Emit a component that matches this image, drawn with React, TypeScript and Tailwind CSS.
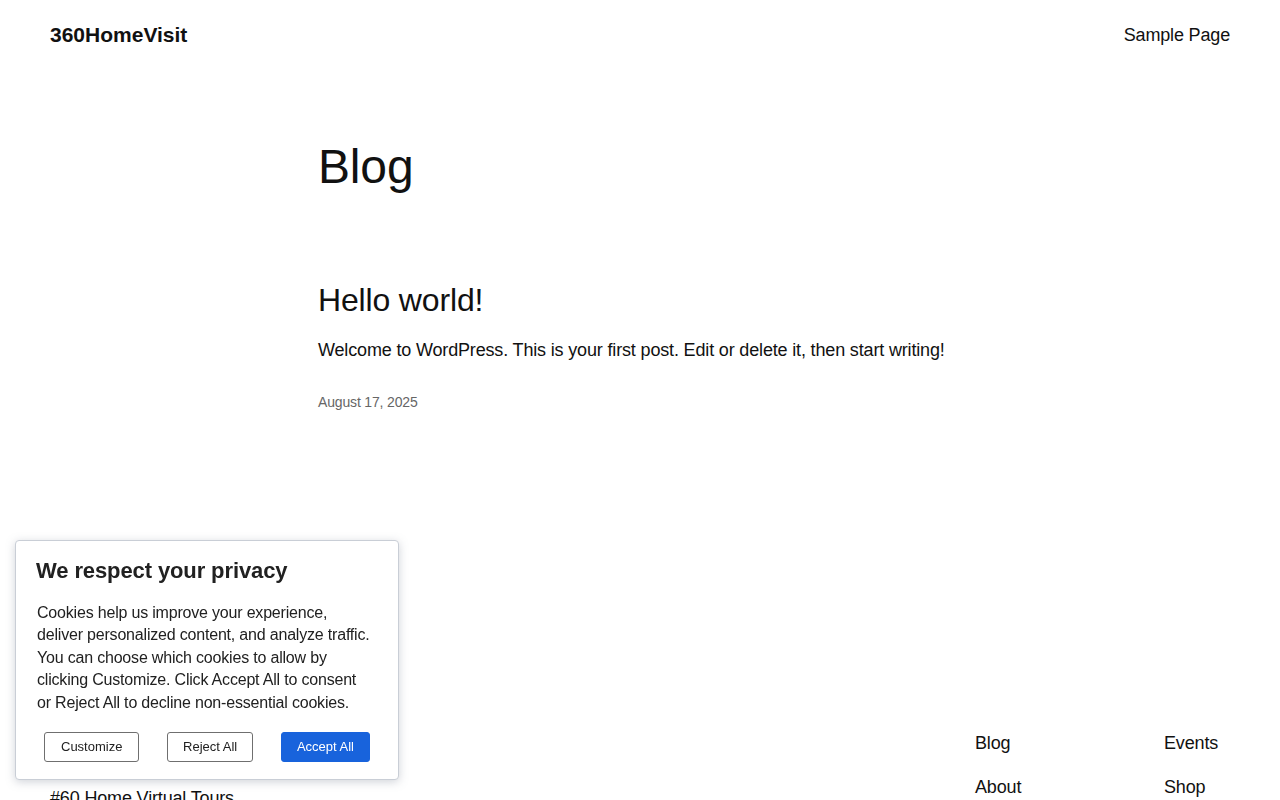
import React from 'react';

const footerCols = [
  ['Blog', 'About', 'FAQs', 'Authors'],
  ['Events', 'Shop', 'Patterns', 'Themes'],
];

const bannerLines = [
  'Cookies help us improve your experience,',
  'deliver personalized content, and analyze traffic.',
  'You can choose which cookies to allow by',
  'clicking Customize. Click Accept All to consent',
  'or Reject All to decline non-essential cookies.',
];

function CookieBanner() {
  return (
    <div className="fixed left-[15px] bottom-[20px] w-[384px] bg-white border border-[#c9ced6] rounded-[4px] shadow-[0_2px_10px_rgba(120,130,145,0.35)] px-[20px] pt-[17px] pb-[17px] text-[#212121]">
      <h2 className="text-[22px] leading-[1.2] font-bold tracking-[-0.005em]">We respect your privacy</h2>
      <p className="mt-[17px] -mr-[6px] text-[16px] leading-[22.5px] pl-[1px] tracking-[-0.012em]">
        {bannerLines.map((line) => (
          <span key={line} className="block whitespace-nowrap">{line}</span>
        ))}
      </p>
      <div className="mt-[18px] mx-[8px] flex justify-between tracking-normal">
        <button className="px-[16px] py-[6px] text-[13px] leading-[16px] border border-[#6f6f6f] rounded-[3px] bg-white text-[#212121]">
          Customize
        </button>
        <button className="px-[15px] py-[6px] text-[13px] leading-[16px] border border-[#6f6f6f] rounded-[3px] bg-white text-[#212121]">
          Reject All
        </button>
        <button className="px-[15px] py-[6px] text-[13px] leading-[16px] border border-[#1863dc] rounded-[3px] bg-[#1863dc] text-white">
          Accept All
        </button>
      </div>
    </div>
  );
}

export default function App() {
  return (
    <div className="min-h-screen bg-white text-[#111111] tracking-[-0.01em] font-['Liberation_Sans',Arial,sans-serif]">
      {/* Site header */}
      <header className="h-[70px] px-[50px] flex items-center justify-between">
        <a href="#" className="text-[21px] leading-[1.2] font-bold tracking-normal">360HomeVisit</a>
        <nav>
          <a href="#" className="text-[18px] leading-[1.2] relative top-[1px]">Sample Page</a>
        </nav>
      </header>

      {/* Posts */}
      <main className="w-[644px] mx-auto pt-[68px] pb-[287px]">
        <h1 className="text-[48px] leading-[1.2]">Blog</h1>
        <article className="mt-[85px]">
          <h2 className="text-[32px] leading-[1.2]">
            <a href="#">Hello world!</a>
          </h2>
          <p className="mt-[17px] text-[18px] leading-[1.6]">
            Welcome to WordPress. This is your first post. Edit or delete it, then start writing!
          </p>
          <p className="mt-[28px] text-[14px] leading-[1.4] text-[#666666]">August 17, 2025</p>
        </article>
      </main>

      {/* Site footer */}
      <footer className="px-[50px] pt-[34px] pb-[60px] flex justify-between">
        <div className="pt-[55px] text-[18px] leading-[1.2]">#60 Home Virtual Tours</div>
        <div className="grid grid-cols-[189px_66px]">
          {footerCols.map((col, i) => (
            <ul key={i} className="flex flex-col gap-[22px]">
              {col.map((item) => (
                <li key={item} className="text-[18px] leading-[1.2]">
                  <a href="#">{item}</a>
                </li>
              ))}
            </ul>
          ))}
        </div>
      </footer>

      <CookieBanner />
    </div>
  );
}
